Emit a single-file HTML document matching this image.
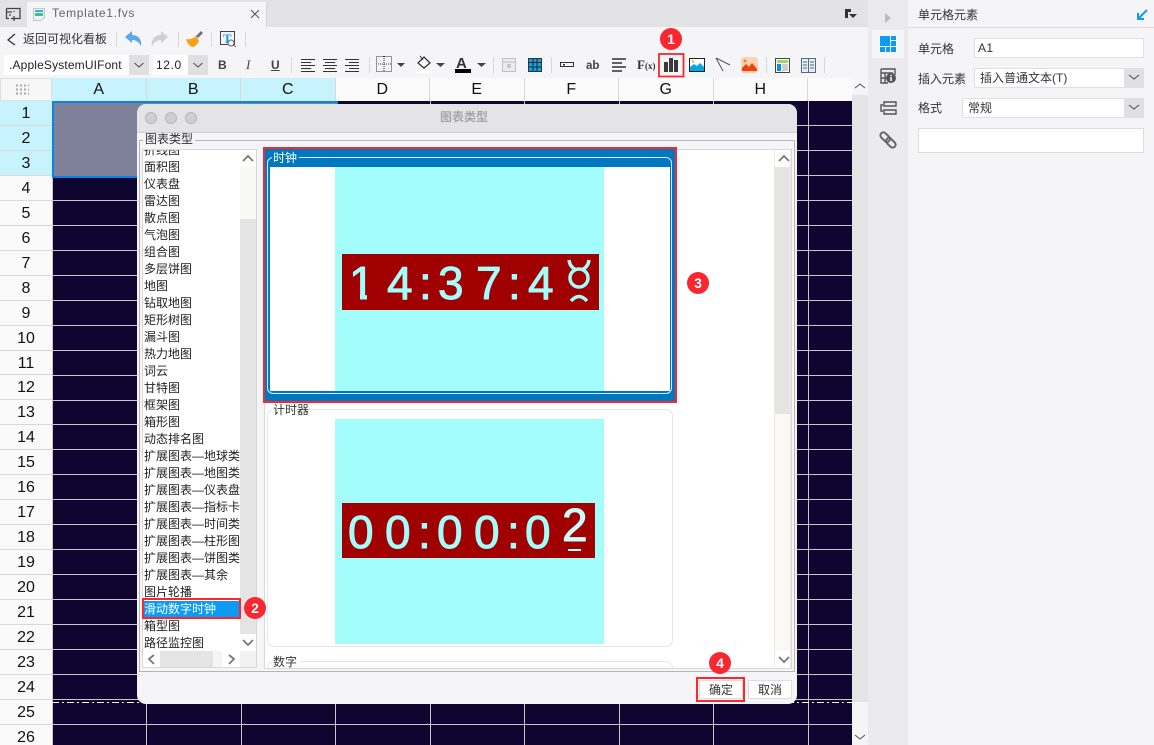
<!DOCTYPE html>
<html><head><meta charset="utf-8">
<style>
html,body{margin:0;padding:0;width:1154px;height:745px;overflow:hidden;background:#f5f5f7}
body{position:relative;font-family:"Liberation Sans","Noto Sans CJK SC",sans-serif;font-size:12px;color:#222}
.b{position:absolute;box-sizing:border-box}
.t{position:absolute;white-space:nowrap;line-height:16px;height:16px}
#cols{position:absolute;left:52px;top:78px;height:23px;display:flex;width:800px;overflow:hidden}
#cols div{flex:none;width:94.5px;box-sizing:border-box;border-right:1px solid #d8d8d8;text-align:center;font-size:16px;line-height:23px;background:#fbfbfb;color:#111}
#cols div.s{background:#c6f3fd}
#rows{position:absolute;left:0;top:101px;width:52px}
#rows div{height:24.96px;box-sizing:border-box;border-bottom:1px solid #d9d9d9;text-align:center;font-size:16px;line-height:25px;background:#fafafa;color:#111}
#rows div.s{background:#c6f3fd}
#list{position:absolute}
#list div{height:17px;line-height:17px;font-size:12px;white-space:nowrap;color:#222}
.g{position:absolute;color:#a3fdfb;font-size:46px;line-height:50px;height:50px;font-family:"Liberation Sans",sans-serif;-webkit-text-stroke:.9px #a3fdfb}
.badge{position:absolute;width:22px;height:22px;border-radius:50%;background:#f9272f;color:#fff;font-weight:bold;font-size:14px;line-height:22px;text-align:center}
</style></head><body>

<!-- tab bar -->
<div class="b" style="left:0;top:0;width:868px;height:27px;background:#e3e3e5"></div>
<div class="b" style="left:27px;top:2px;width:240px;height:25px;background:#f5f5f7;border-right:1px solid #d5d5d5"></div>
<div class="b" style="left:0;top:27px;width:868px;height:51px;background:#f5f5f7"></div>
<div class="t" style="left:52px;top:5px;color:#666;letter-spacing:.7px">Template1.fvs</div>
<div class="t" style="left:23px;top:31px;color:#333">返回可视化看板</div>

<!-- combos -->
<div class="b" style="left:4px;top:55px;width:145px;height:20px;background:#fff"></div>
<div class="b" style="left:129px;top:55px;width:20px;height:20px;background:#e0e0e2"></div>
<div class="t" style="left:9px;top:57px;font-size:12px;letter-spacing:.15px;color:#222">.AppleSystemUIFont</div>
<div class="b" style="left:153px;top:55px;width:55px;height:20px;background:#fff"></div>
<div class="b" style="left:188px;top:55px;width:20px;height:20px;background:#e0e0e2"></div>
<div class="t" style="left:156px;top:57px;letter-spacing:.6px">12.0</div>

<!-- toolbar text-like glyphs -->
<div class="t" style="left:218px;top:57px;font-weight:bold;color:#444">B</div>
<div class="t" style="left:246px;top:57px;font-style:italic;font-family:'Liberation Serif',serif;font-size:13px;color:#444">I</div>
<div class="t" style="left:271px;top:57px;font-weight:bold;color:#444;text-decoration:underline">U</div>
<div class="t" style="left:586px;top:58px;font-weight:bold;font-size:11.5px;color:#444">ab</div>
<div class="t" style="left:637px;top:57px;font-family:'Liberation Serif',serif;font-size:13px;font-weight:bold;color:#333">F<span style="font-size:9px">(x)</span></div>
<div class="t" style="left:456px;top:56px;font-weight:bold;font-size:15px;color:#333">A</div>

<!-- grid -->
<div class="b" style="left:52px;top:101px;width:800px;height:644px;background:#0e0630"></div>
<svg class="b" style="left:52px;top:101px" width="800" height="644">
<g stroke="#c9c9c9" stroke-width="1">
<path d="M.5 0V644M94.5 0V644M189.5 0V644M283.5 0V644M378.5 0V644M472.5 0V644M567.5 0V644M661.5 0V644M756.5 0V644"/>
<path d="M0 24.5H800M0 49.5H800M0 74.5H800M0 99.5H800M0 124.5H800M0 149.5H800M0 174.5H800M0 199.5H800M0 224.5H800M0 249.5H800M0 274.5H800M0 299.5H800M0 323.5H800M0 348.5H800M0 373.5H800M0 398.5H800M0 423.5H800M0 448.5H800M0 473.5H800M0 498.5H800M0 523.5H800M0 548.5H800M0 573.5H800M0 598.5H800M0 623.5H800"/>
</g>
<path d="M0 601.5H800" stroke="#fff" stroke-dasharray="7 3 2 3"/>
</svg>
<div id="cols"><div class="s">A</div><div class="s">B</div><div class="s">C</div><div>D</div><div>E</div><div>F</div><div>G</div><div>H</div><div></div></div>
<div class="b" style="left:0;top:78px;width:52px;height:23px;background:#f7f7f7;border:1px solid #e0e0e0"></div>
<div id="rows"><div class="s">1</div><div class="s">2</div><div class="s">3</div><div>4</div><div>5</div><div>6</div><div>7</div><div>8</div><div>9</div><div>10</div><div>11</div><div>12</div><div>13</div><div>14</div><div>15</div><div>16</div><div>17</div><div>18</div><div>19</div><div>20</div><div>21</div><div>22</div><div>23</div><div>24</div><div>25</div><div>26</div></div>
<div class="b" style="left:52px;top:101px;width:286px;height:77px;background:#7f8099;border:2px solid #0a84e6"></div>

<!-- right scrollbar -->
<div class="b" style="left:852px;top:78px;width:16px;height:667px;background:#f5f5f7"></div>
<div class="b" style="left:852px;top:95px;width:16px;height:607px;background:#e4e4e4"></div>

<!-- sidebar -->
<div class="b" style="left:868px;top:0;width:40px;height:745px;background:#ebebed"></div>
<div class="b" style="left:872px;top:30px;width:32px;height:28px;background:#f5f5f7"></div>
<div class="b" style="left:908px;top:0;width:246px;height:745px;background:#f5f5f7"></div>
<div class="b" style="left:908px;top:27px;width:246px;height:1px;background:#dcdcde"></div>
<div class="t" style="left:918px;top:7px;color:#333">单元格元素</div>
<div class="t" style="left:918px;top:41px;color:#333">单元格</div>
<div class="b" style="left:974px;top:38px;width:170px;height:20px;background:#fff;border:1px solid #e0e0e0"></div>
<div class="t" style="left:978px;top:40px;letter-spacing:.4px;color:#333">A1</div>
<div class="t" style="left:918px;top:71px;color:#333">插入元素</div>
<div class="b" style="left:974px;top:68px;width:170px;height:20px;background:#fff;border:1px solid #e0e0e0"></div>
<div class="b" style="left:1124px;top:68px;width:20px;height:20px;background:#e0e0e2"></div>
<div class="t" style="left:980px;top:70px;color:#333">插入普通文本(T)</div>
<div class="t" style="left:918px;top:100px;color:#333">格式</div>
<div class="b" style="left:962px;top:98px;width:182px;height:20px;background:#fff;border:1px solid #e0e0e0"></div>
<div class="b" style="left:1124px;top:98px;width:20px;height:20px;background:#e0e0e2"></div>
<div class="t" style="left:968px;top:100px;color:#333">常规</div>
<div class="b" style="left:918px;top:128px;width:226px;height:25px;background:#fff;border:1px solid #dcdcdc"></div>

<!-- dialog -->
<div class="b" style="left:137px;top:104px;width:660px;height:600px;background:#f5f5f7;border-radius:9px"></div>
<div class="b" style="left:137px;top:104px;width:660px;height:29px;background:#e4e4e6;border-radius:9px 9px 0 0;border-bottom:1px solid #cfcfcf"></div>
<div class="b" style="left:145px;top:112px;width:12px;height:12px;border-radius:50%;background:#cfcfcf;border:1px solid #b8b8b8"></div>
<div class="b" style="left:165px;top:112px;width:12px;height:12px;border-radius:50%;background:#cfcfcf;border:1px solid #b8b8b8"></div>
<div class="b" style="left:185px;top:112px;width:12px;height:12px;border-radius:50%;background:#cfcfcf;border:1px solid #b8b8b8"></div>
<div class="t" style="left:440px;top:109px;font-weight:bold;color:#a8a8a8">图表类型</div>
<div class="b" style="left:139px;top:140px;width:656px;height:532px;border:1px solid #b5b5b5"></div>
<div class="b" style="left:143px;top:134px;width:52px;height:13px;background:#f5f5f7"></div>
<div class="t" style="left:145px;top:131px;color:#333">图表类型</div>

<!-- list -->
<div class="b" style="left:142px;top:149px;width:115px;height:519px;background:#fff;border:1px solid #d8d8d8;overflow:hidden">
<div id="list" style="left:1px;top:-9px;margin-top:1px">
<div>折线图</div><div>面积图</div><div>仪表盘</div><div>雷达图</div><div>散点图</div><div>气泡图</div><div>组合图</div><div>多层饼图</div><div>地图</div><div>钻取地图</div><div>矩形树图</div><div>漏斗图</div><div>热力地图</div><div>词云</div><div>甘特图</div><div>框架图</div><div>箱形图</div><div>动态排名图</div><div>扩展图表—地球类</div><div>扩展图表—地图类</div><div>扩展图表—仪表盘</div><div>扩展图表—指标卡</div><div>扩展图表—时间类</div><div>扩展图表—柱形图</div><div>扩展图表—饼图类</div><div>扩展图表—其余</div><div>图片轮播</div><div style="background:#0a9cf5;color:#fff;width:98px">滑动数字时钟</div><div>箱型图</div><div>路径监控图</div>
</div>
</div>
<div class="b" style="left:240px;top:150px;width:16px;height:517px;background:#e4e4e4"></div>
<div class="b" style="left:240px;top:150px;width:16px;height:17px;background:#fff"></div>
<div class="b" style="left:240px;top:167px;width:16px;height:52px;background:#f8f8f5"></div>
<div class="b" style="left:240px;top:634px;width:16px;height:33px;background:#fff"></div>
<div class="b" style="left:143px;top:651px;width:97px;height:16px;background:#e4e4e4"></div>
<div class="b" style="left:143px;top:651px;width:17px;height:16px;background:#fff"></div>
<div class="b" style="left:213px;top:651px;width:9px;height:16px;background:#f5f5f5"></div>
<div class="b" style="left:222px;top:651px;width:18px;height:16px;background:#fff"></div>
<div class="b" style="left:240px;top:651px;width:16px;height:16px;background:#f2f2f2"></div>
<div class="b" style="left:142px;top:598px;width:99px;height:21px;border:2px solid #f9272f"></div>

<!-- chart pane -->
<div class="b" style="left:264px;top:149px;width:528px;height:520px;background:#fff;border:1px solid #d8d8d8;overflow:hidden"></div>
<div class="b" style="left:774px;top:150px;width:17px;height:518px;background:#faf9f5;border-left:1px solid #efeadf;border-right:1px solid #efeadf"></div>
<div class="b" style="left:775px;top:167px;width:15px;height:247px;background:#e4e4e4"></div>
<div class="b" style="left:775px;top:150px;width:15px;height:17px;background:#fff"></div>
<div class="b" style="left:775px;top:651px;width:15px;height:17px;background:#fff"></div>

<!-- clock card -->
<div class="b" style="left:263px;top:147px;width:414px;height:256px;border:2px solid #f9272f;background:#0078c0"></div>
<div class="b" style="left:267px;top:157px;width:405px;height:237px;border:1px solid #d8edf8;border-radius:6px"></div>
<div class="b" style="left:270px;top:167px;width:400px;height:224px;background:#fff"></div>
<div class="b" style="left:272px;top:151px;width:27px;height:12px;background:#0078c0"></div>
<div class="t" style="left:273px;top:150px;color:#fff">时钟</div>
<div class="b" style="left:335px;top:167px;width:269px;height:224px;background:#a3fdfb"></div>
<div class="b" style="left:342px;top:254px;width:257px;height:56px;background:#a00000"></div>
<div class="g" style="left:349px;top:258px">1</div>
<div class="b" style="left:349px;top:294px;width:11px;height:6px;background:#a00000"></div>
<div class="b" style="left:367px;top:294px;width:9px;height:6px;background:#a00000"></div>
<div class="g" style="left:387px;top:258px">4</div>
<div class="g" style="left:419px;top:258px">:</div>
<div class="g" style="left:438px;top:258px">3</div>
<div class="g" style="left:476px;top:258px">7</div>
<div class="g" style="left:508px;top:258px">:</div>
<div class="g" style="left:528px;top:258px">4</div>
<svg class="b" style="left:565px;top:254px" width="30" height="56"><g fill="none" stroke="#a3fdfb" stroke-width="3.500"><circle cx="14" cy="24" r="9"/><path d="M4 6Q5 13 10 15M24 6Q23 13 18 15"/><path d="M6 47Q14 38 22 47"/></g></svg>

<!-- timer card -->
<div class="b" style="left:267px;top:409px;width:406px;height:238px;border:1px solid #e6e6e6;border-radius:7px"></div>
<div class="b" style="left:272px;top:403px;width:37px;height:12px;background:#fff"></div>
<div class="t" style="left:273px;top:402px;color:#333">计时器</div>
<div class="b" style="left:335px;top:419px;width:269px;height:225px;background:#a3fdfb"></div>
<div class="b" style="left:342px;top:503px;width:253px;height:55px;background:#a00000"></div>
<div class="g" style="left:348px;top:507px">0</div>
<div class="g" style="left:385px;top:507px">0</div>
<div class="g" style="left:418px;top:507px">:</div>
<div class="g" style="left:437px;top:507px">0</div>
<div class="g" style="left:474px;top:507px">0</div>
<div class="g" style="left:507px;top:507px">:</div>
<div class="g" style="left:525px;top:507px">0</div>
<div class="g" style="left:562px;top:500px;color:#c8fefc;-webkit-text-stroke-color:#c8fefc">2</div>
<div class="b" style="left:568px;top:549px;width:13px;height:2px;background:#e8ffff"></div>

<!-- number card -->
<div class="b" style="left:267px;top:661px;width:406px;height:7px;border:1px solid #e6e6e6;border-bottom:0;border-radius:7px 7px 0 0"></div>
<div class="b" style="left:272px;top:656px;width:28px;height:12px;background:#fff"></div>
<div class="t" style="left:273px;top:654px;color:#333">数字</div>

<!-- buttons -->
<div class="b" style="left:699px;top:680px;width:44px;height:19px;background:#fff;border:1px solid #ddd"></div>
<div class="b" style="left:748px;top:680px;width:44px;height:19px;background:#fff;border:1px solid #ddd"></div>
<div class="b" style="left:696px;top:677px;width:49px;height:25px;border:2px solid #f9272f"></div>
<div class="t" style="left:709px;top:682px;color:#333">确定</div>
<div class="t" style="left:758px;top:682px;color:#333">取消</div>

<!-- icons -->
<svg class="b" style="left:0;top:0" width="1154" height="745" fill="none">
<!-- top-left -->
<path d="M6.500 8.500H20V18.500H14M6.500 8.500V18.500H9M7 12H12M14 11V12M14 16V21M11 18.500H17M9 15H11" stroke="#444" stroke-width="1.300"/>
<!-- tab icon -->
<path d="M33.500 8.500H44.500V17.500L41 20.500H33.500Z" fill="#eef2f2" stroke="#c5c5c5"/>
<rect x="35" y="10" width="8" height="2" fill="#35b0c8"/><rect x="35" y="13" width="8" height="3" fill="#3ac28b"/>
<path d="M251 10L259 18M259 10L251 18" stroke="#555" stroke-width="1.100"/>
<path d="M845 9H851V12H848V18H845Z" fill="#333"/><path d="M849 14H857L853 18Z" fill="#333"/>
<!-- back -->
<path d="M15 34L8 40L15 45" stroke="#333" stroke-width="1.300"/>
<!-- seps -->
<path d="M116.500 32V47M178.500 32V47M211.500 32V47M245.500 32V47M291.500 57V73M369.500 57V73M493.500 57V73M551.500 57V73M766.500 57V73M824.500 57V73" stroke="#d8d8d8"/>
<!-- undo/redo -->
<path d="M125 37L132 31V35C138 35 142 39 141 46C139 42 136 40 132 40V43Z" fill="#5aa8e8"/>
<path d="M168 37L161 31V35C155 35 151 39 152 46C154 42 157 40 161 40V43Z" fill="#d0d0d2"/>
<!-- brush -->
<path d="M186 39C190 40 194 38 196 36L199 41C197 44 195 47 193 47C190 47 187 43 186 39Z" fill="#f5a213"/>
<path d="M196 36L201 31L203 33L198 38Z" fill="#6f6f6f"/>
<!-- T search -->
<rect x="220.500" y="31.500" width="14" height="13" stroke="#444"/>
<text x="223" y="43" font-family="Liberation Serif" font-weight="bold" font-size="13" fill="#0aa0ee">T</text>
<circle cx="231" cy="43" r="3" fill="#f5f5f7" stroke="#666"/><path d="M233 45L236 47" stroke="#666"/>
<!-- combo arrows -->
<path d="M134.500 63L139 67L143.500 63M193.500 63L198 67L202.500 63M1129 75L1134 79L1139 75M1129 105L1134 109L1139 105" stroke="#555" stroke-width="1.100"/>
<!-- align -->
<path d="M301 59.500H315M301 62.500H311M301 65.500H315M301 68.500H311M301 71.500H315M323 59.500H337M325 62.500H335M323 65.500H337M325 68.500H335M323 71.500H337M345 59.500H359M349 62.500H359M345 65.500H359M349 68.500H359M345 71.500H359" stroke="#333"/>
<!-- borders -->
<path d="M376.500 56.500H391.500V71.500H376.500ZM384 56V72M376 64H392" stroke="#333" stroke-dasharray="1 1"/>
<path d="M397 63H405L401 67ZM436 63H445L440.500 67ZM477 63H486L481.500 67Z" fill="#444"/>
<!-- bucket -->
<path d="M418 63L424 57L430 63L424 68Z" stroke="#333" stroke-width="1.300" fill="#fff"/><path d="M420 56L423 60" stroke="#333"/>
<rect x="416" y="69" width="15" height="4" fill="#fff"/>
<rect x="455" y="69" width="16" height="4" fill="#000"/>
<!-- grey table -->
<rect x="502.500" y="58.500" width="13" height="13" fill="#ececee" stroke="#c0c0c0"/><path d="M503 62H515" stroke="#c0c0c0"/><rect x="507" y="64" width="4" height="4" fill="#c8c8c8"/>
<!-- blue table -->
<rect x="528.500" y="58.500" width="13" height="13" fill="#0aa5e8" stroke="#333"/><path d="M529 62.500H541M529 67H541M533 59V71M537 59V71" stroke="#222"/>
<!-- box -->
<rect x="560.500" y="62.500" width="13" height="4" stroke="#333"/><rect x="563" y="64" width="2" height="1.500" fill="#333"/>
<!-- lines -->
<path d="M612 59H626M612 63H622M612 67H626M612 71H622" stroke="#333" stroke-width="1.600"/>
<!-- chart -->
<rect x="659" y="54" width="24.500" height="22.500" stroke="#f9272f" stroke-width="1.800"/>
<path d="M664 62H668V72H664ZM669 58H673V72H669ZM674 60H678V72H674Z" fill="#3a3a3a"/>
<!-- image -->
<rect x="689.500" y="58.500" width="15" height="13" fill="#fff" stroke="#222"/>
<path d="M690 71V67L694 64L697 66L700 63L704 67V71Z" fill="#0aa5e8"/><circle cx="693" cy="61.500" r="1.200" fill="#f2b632"/>
<!-- pointer -->
<path d="M716 58L730 65M716 58L723 71M716 58L722 61" stroke="#555"/>
<!-- orange -->
<rect x="741" y="57" width="17" height="16" rx="3" fill="#fcd3b4"/><path d="M742 71V68L746 64L749 67L752 63L757 69V71Z" fill="#f0420a"/><circle cx="745" cy="61" r="1.500" fill="#f5821f"/>
<!-- layouts -->
<rect x="775.500" y="58.500" width="14" height="14" fill="#fff" stroke="#444"/><rect x="777" y="60" width="11" height="3" fill="#9ed66a"/><rect x="777" y="64" width="4" height="7" fill="#0a8fdc"/><rect x="782" y="64" width="6" height="7" fill="#cfcfcf"/>
<rect x="801.500" y="58.500" width="14" height="14" fill="#e6eef6" stroke="#55697c"/><path d="M808.500 59V72M803 62H807M803 65H807M803 68H807M810 62H814M810 65H814M810 68H814" stroke="#55697c"/>
<!-- header corner dots -->
<path d="M16 85.500H29M16 89.500H29M16 93.500H29" stroke="#aaa" stroke-width="2" stroke-dasharray="2 2"/>
<!-- scroll chevrons -->
<path d="M855 88L860 84L865 88M855 735L860 739L865 735" stroke="#555" stroke-width="1"/>
<path d="M243 161L248 156L253 161M243 640L248 645L253 640M779 161L784 156L789 161M779 657L784 662L789 657" stroke="#777" stroke-width="1.800"/>
<path d="M154 655L149 659L154 664M229 655L234 659L229 664" stroke="#777" stroke-width="1.800"/>
<!-- sidebar icons -->
<path d="M885 13L891 18L885 23Z" fill="#bbb"/>
<path d="M880 36H890V46H880ZM891 36H896V40H891ZM891 41H896V46H891ZM880 47H885V52H880ZM886 47H890V52H886ZM891 47H896V52H891Z" fill="#0a9cf5"/>
<path d="M881 69H895V75M881 69V83H888M881 73H893M885 73V83M881 78H888" stroke="#555" stroke-width="1.400"/><circle cx="891" cy="78" r="5" fill="#555"/><rect x="890.300" y="77" width="1.500" height="4" fill="#fff"/><rect x="890.300" y="74.800" width="1.500" height="1.400" fill="#fff"/>
<path d="M884 102H896V106H884ZM884 110H896V114H884ZM883 105H881V111H883" stroke="#555" stroke-width="1.400"/>
<g transform="rotate(45 888 140)" stroke="#666" stroke-width="2"><rect x="878.500" y="137" width="11" height="6" rx="3"/><rect x="886.500" y="137" width="11" height="6" rx="3"/></g>
<path d="M1147 10L1139 18M1138 13V19H1144" stroke="#0a9cf5" stroke-width="2"/>
</svg>

<!-- badges -->
<div class="badge" style="left:660px;top:28px">1</div>
<div class="badge" style="left:244px;top:597px">2</div>
<div class="badge" style="left:687px;top:272px">3</div>
<div class="badge" style="left:709px;top:652px">4</div>
</body></html>
